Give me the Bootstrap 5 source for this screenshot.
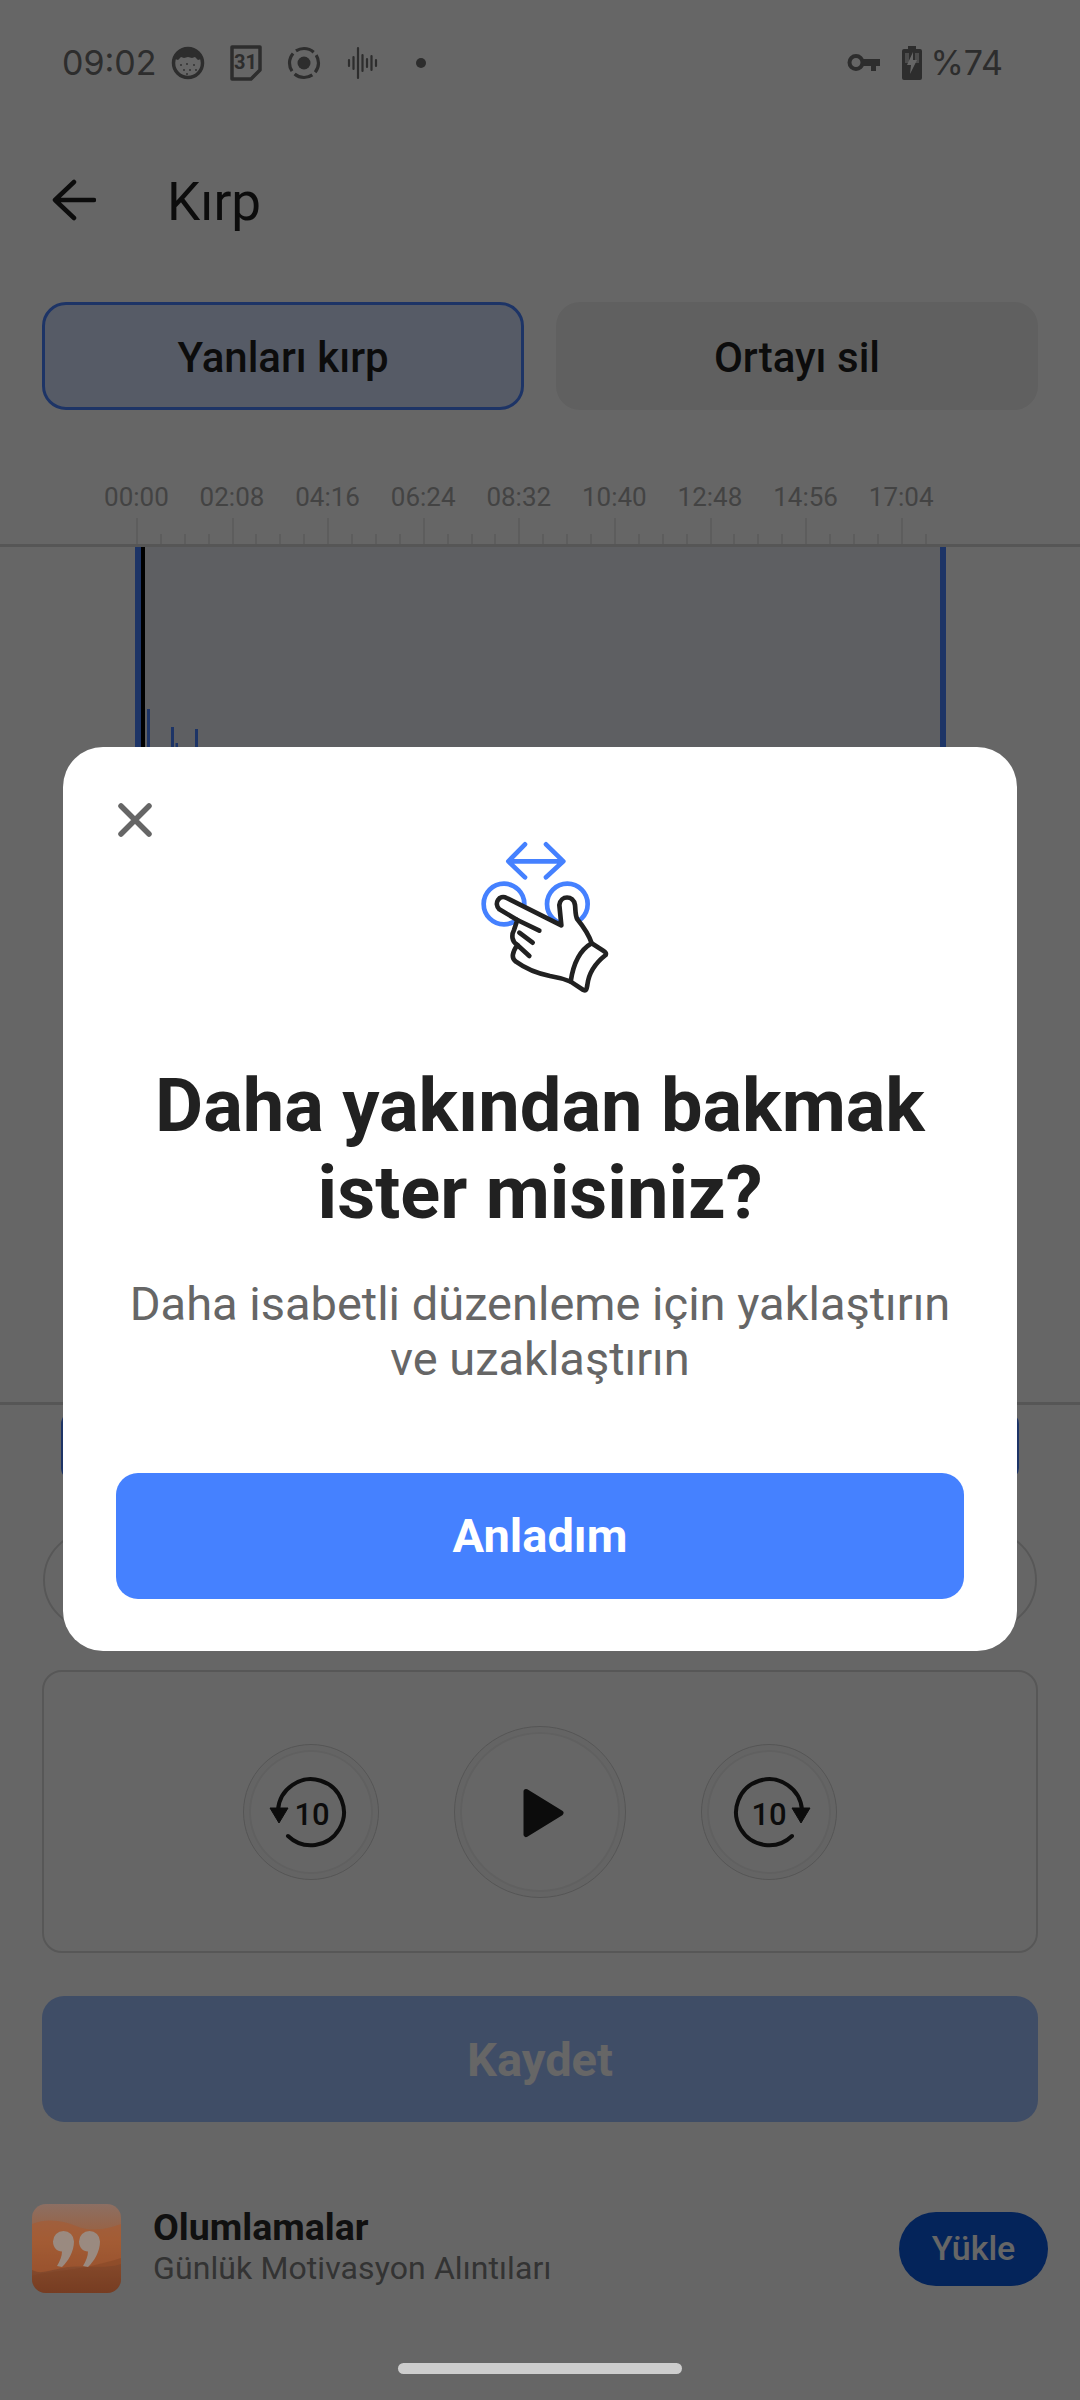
<!DOCTYPE html>
<html lang="tr">
<head>
<meta charset="utf-8">
<title>Kırp</title>
<link rel="stylesheet" href="https://cdn.jsdelivr.net/npm/bootstrap@5.3.0/dist/css/bootstrap.min.css">
<style>
html,body{margin:0;background:#fff}
body{width:1080px;height:2400px;overflow:hidden;position:relative;font-family:Roboto,"Liberation Sans",sans-serif;color:#1f1f1f}
.status-row{height:126px;padding:0 77px 0 62px;color:#707070}
.clock{font-family:Inter,Roboto,sans-serif;font-size:34px;line-height:1;margin-right:14px}
.pct{font-family:Inter,Roboto,sans-serif;font-size:34px;line-height:1;margin-left:8px}
.ic-gap{margin-right:24px}
.tool-row{height:148px;padding-left:52px}
.page-title{font-size:53px;font-weight:400;line-height:1;margin:4px 0 0 71px}
.tab-row{padding:0 42px;margin-top:28px;gap:32px}
.tab-btn{flex:1 1 0;height:108px;font-size:42px;font-weight:500;color:#1f1f1f;border-radius:24px;border:3px solid transparent;padding:2px 0 0;--bs-btn-color:#1f1f1f}
.tab-on{background:#d6e4ff;border-color:#4a82ff}
.tab-off{background:#f0f0f0}
.time-row{padding:72px 0 0 88.6px;height:108px}
.time-row span{width:95.6px;flex:none;text-align:center;font-size:26px;line-height:30px;color:#a9a9a9}
.ruler{height:26px;margin-left:136px;width:792px;
 background:
  repeating-linear-gradient(90deg,#e8e8e8 0 2px,transparent 2px 95.6px) 0 0/100% 26px no-repeat,
  repeating-linear-gradient(90deg,#e8e8e8 0 2px,transparent 2px 23.9px) 0 100%/100% 10px no-repeat}
.wave-wrap{height:861px;border-top:3px solid #d8d8d8;border-bottom:3px solid #d8d8d8}
.wave-sel{position:relative;margin-left:135px;width:811px;height:100%;background:#ebedf6;border-left:6px solid #4a82ff;border-right:6px solid #4a82ff}
.wave-marks{position:absolute;left:0;top:0}
.tool-bar{height:68px;margin:7px 61px 0;background:#4a82ff;border-radius:12px}
.pill-row{height:100px;margin:50px 43px 0;border:2.500px solid #dadada;border-radius:50px}
.player{height:283px;margin:40px 42px 0;border:2.500px solid #dadada;border-radius:20px;gap:75px}
.round-btn{border-radius:50%;border:1.500px solid #d4d4d4;box-shadow:inset 0 0 0 5px #fbfbfb,inset 0 0 0 7px #f0f0f0;flex:none}
.round-sm{width:136px;height:136px}
.round-lg{width:172px;height:172px}
.save-btn{height:126px;margin:43px 42px 0;width:calc(100% - 84px);background:#9fc0ff;color:#fff;font-size:47px;font-weight:700;border:0;border-radius:22px;display:block;padding:3px 0 0}
.ad-row{height:89px;margin-top:82px;padding:0 32px}
.ad-art{width:89px;height:89px;border-radius:14px;position:relative;z-index:20;flex:none;display:block}
.ad-text{margin-left:32px;flex:1}
.ad-name{font-size:37.500px;font-weight:700;line-height:42px;color:#2a2a2a;margin-top:-3px}
.ad-sub{font-size:32px;line-height:40px;color:#808080;letter-spacing:.1px}
.ad-btn{width:149px;height:74px;background:#0c5ae1;color:#fff;font-size:34px;font-weight:500;border:0;border-radius:37px;padding:0;flex:none}
.home-bar{width:284px;height:11px;background:#cdcdcd;border-radius:6px;margin:70px auto 0;position:relative;z-index:20}
.dim-layer{position:absolute;inset:0;background:rgba(0,0,0,.6);z-index:10}
.sheet{width:954px;background:#fff;border:0;border-radius:40px;padding:73px 53px 52px;position:relative;margin-top:-3px}
.sheet-close{position:absolute;left:55px;top:56px;background:none;border:0;padding:0;line-height:0}
.hand{display:block;margin:0 auto}
.sheet-title{font-size:74px;font-weight:700;line-height:87px;color:#212121;margin:52px 0 0;text-align:center}
.sheet-sub{font-size:47px;line-height:55px;color:#666;margin:40px 0 0;text-align:center}
.sheet-btn{height:126px;margin-top:87px;background:#4581ff;color:#fff;font-size:47px;font-weight:700;border:0;border-radius:22px;padding:2px 0 0}
</style>
</head>
<body>
<div class="status-row d-flex align-items-center">
  <span class="clock">09:02</span>
  <svg class="ic-gap" width="34" height="34" viewBox="0 0 34 34"><circle cx="17" cy="17" r="14.500" fill="none" stroke="currentColor" stroke-width="3.500"/><path d="M4 13C6 5 12 2 17 2s11 3 13 11l-3 1-3-3-3 1-4-1-4 1-3-1-3 3z" fill="currentColor"/><g fill="currentColor"><circle cx="10" cy="19" r=".9"/><circle cx="16" cy="18" r=".9"/><circle cx="23" cy="19" r=".9"/><circle cx="13" cy="24" r=".9"/><circle cx="19" cy="24" r=".9"/><circle cx="25" cy="24" r=".9"/><circle cx="16" cy="28" r=".9"/></g></svg>
  <svg class="ic-gap" width="34" height="36" viewBox="0 0 34 36"><path d="M3 2h28v23l-9 9H3z" fill="none" stroke="currentColor" stroke-width="3.500" stroke-linejoin="round"/><text x="16.500" y="24" text-anchor="middle" font-family="Roboto,sans-serif" font-weight="700" font-size="20" fill="currentColor">31</text></svg>
  <svg class="ic-gap" width="34" height="34" viewBox="0 0 34 34"><circle cx="17" cy="17" r="14.500" fill="none" stroke="currentColor" stroke-width="3.200" stroke-dasharray="19 3.800" stroke-dashoffset="9"/><circle cx="17" cy="17" r="6.500" fill="currentColor"/></svg>
  <svg width="34" height="34" viewBox="0 0 34 34" style="margin-right:36px"><g stroke="currentColor" stroke-width="2.200" stroke-linecap="round"><path d="M4 14v6M8.500 11v12M13 2v30M17.500 9v16M22 13v8M26.500 10v14M31 14v6"/></g></svg>
  <svg width="12" height="12" viewBox="0 0 12 12"><circle cx="6" cy="6" r="5" fill="currentColor"/></svg>
  <span class="ms-auto d-flex align-items-center">
    <svg width="34" height="20" viewBox="0 0 34 20" style="margin-right:21px"><circle cx="9" cy="9.500" r="6.500" fill="none" stroke="currentColor" stroke-width="4"/><path d="M15 6h18v7h-4v5h-5v-5h-9z" fill="currentColor"/></svg>
    <svg width="20" height="34" viewBox="0 0 20 34"><path d="M6 0h8v3h4a2 2 0 0 1 2 2v27a2 2 0 0 1-2 2H2a2 2 0 0 1-2-2V5a2 2 0 0 1 2-2h4z" fill="currentColor"/><path d="M3 7h4v10h-4zM13 7h4v10h-4z" fill="#fff" opacity=".55"/><path d="M11 6l-6 13h4l-1 9 7-14h-4z" fill="#fff"/></svg>
    <span class="pct">%74</span>
  </span>
</div>

<div class="tool-row d-flex align-items-center">
  <svg width="44" height="42" viewBox="0 0 44 42"><path d="M22 3L3 21l19 18M4 21h38" fill="none" stroke="#1f1f1f" stroke-width="4.500" stroke-linecap="round" stroke-linejoin="round"/></svg>
  <h1 class="page-title">Kırp</h1>
</div>

<div class="tab-row d-flex">
  <button class="btn tab-btn tab-on">Yanları kırp</button>
  <button class="btn tab-btn tab-off">Ortayı sil</button>
</div>

<div class="time-row d-flex">
  <span>00:00</span><span>02:08</span><span>04:16</span><span>06:24</span><span>08:32</span><span>10:40</span><span>12:48</span><span>14:56</span><span>17:04</span>
</div>
<div class="ruler"></div>

<div class="wave-wrap">
  <div class="wave-sel">
    <svg class="wave-marks" width="70" height="853" viewBox="0 0 70 853">
      <rect x="-1" y="0" width="5" height="853" fill="#000"/>
      <g fill="#4a82ff"><rect x="6" y="162" width="3" height="530"/><rect x="30" y="180" width="3" height="490"/><rect x="34.500" y="196" width="2.500" height="460"/><rect x="54" y="182" width="3" height="490"/></g>
    </svg>
  </div>
</div>
<div class="tool-bar"></div>
<div class="pill-row"></div>

<div class="player d-flex align-items-center justify-content-center">
  <div class="round-btn round-sm d-flex align-items-center justify-content-center">
    <svg width="100" height="100" viewBox="0 0 100 100"><path d="M17 48A33 33 0 1 1 27 74" fill="none" stroke="#1f1f1f" stroke-width="4" stroke-linecap="round"/><path d="M9 46h18l-9 15z" fill="#1f1f1f" stroke="#1f1f1f" stroke-linejoin="round"/><text x="51" y="63" text-anchor="middle" font-family="Roboto,sans-serif" font-size="31" font-weight="500" fill="#1f1f1f">10</text></svg>
  </div>
  <div class="round-btn round-lg d-flex align-items-center justify-content-center">
    <svg width="60" height="60" viewBox="0 0 60 60"><path d="M16 9.500L51 31 16 52.500z" fill="#1f1f1f" stroke="#1f1f1f" stroke-width="5" stroke-linejoin="round"/></svg>
  </div>
  <div class="round-btn round-sm d-flex align-items-center justify-content-center">
    <svg width="100" height="100" viewBox="0 0 100 100"><path d="M83 48A33 33 0 1 0 73 74" fill="none" stroke="#1f1f1f" stroke-width="4" stroke-linecap="round"/><path d="M73 46h18l-9 15z" fill="#1f1f1f" stroke="#1f1f1f" stroke-linejoin="round"/><text x="50" y="63" text-anchor="middle" font-family="Roboto,sans-serif" font-size="31" font-weight="500" fill="#1f1f1f">10</text></svg>
  </div>
</div>

<button class="btn save-btn">Kaydet</button>

<div class="ad-row d-flex align-items-center">
  <svg class="ad-art" width="89" height="89" viewBox="0 0 89 89" role="img" aria-label="Olumlamalar">
    <defs><linearGradient id="ga" x1="0" y1="0" x2="0" y2="1"><stop offset="0" stop-color="#8c6f63"/><stop offset=".4" stop-color="#9c5f3c"/><stop offset="1" stop-color="#733a21"/></linearGradient></defs>
    <rect width="89" height="89" fill="url(#ga)"/>
    <path d="M0 20C15 14 30 16 44 22s30 4 45-2v40C70 66 50 60 30 64S10 70 0 66z" fill="#a85a30" opacity=".6"/>
    <path d="M0 72c20-6 45-4 89-18v35H0z" fill="#7d4023" opacity=".4"/>
    <g fill="#9a8a80" transform="translate(0 1.500)"><path d="M21 36a10.500 10.500 0 1 1 21 0c0 10-6 20-12 25.500l-5-1c3-5 5-10 5-14.500c-5 0-9-4-9-10z"/><path d="M47 36a10.500 10.500 0 1 1 21 0c0 10-6 20-12 25.500l-5-1c3-5 5-10 5-14.500c-5 0-9-4-9-10z"/></g>
  </svg>
  <div class="ad-text">
    <div class="ad-name">Olumlamalar</div>
    <div class="ad-sub">Günlük Motivasyon Alıntıları</div>
  </div>
  <button class="btn ad-btn">Yükle</button>
</div>

<div class="home-bar"></div>

<div class="dim-layer d-flex align-items-center justify-content-center">
  <div class="sheet modal-content">
    <button class="sheet-close" aria-label="Kapat">
      <svg width="34" height="34" viewBox="0 0 34 34"><path d="M3 3l28 28M31 3L3 31" stroke="#666" stroke-width="5.500" stroke-linecap="round" fill="none"/></svg>
    </button>
    <svg class="hand" width="200" height="190" viewBox="0 0 600 570">
      <g fill="none" stroke="#4581ff" stroke-width="14" stroke-linecap="round" stroke-linejoin="round">
        <path d="M208 124H366M255 73l-50 51 50 48M318 73l52 51-52 48"/>
        <circle cx="192" cy="252" r="61"/>
        <circle cx="382" cy="252" r="61"/>
      </g>
      <g stroke="#212121" stroke-width="14" stroke-linecap="round" stroke-linejoin="round">
        <path fill="#fff" d="M364 316L200 234C178 222 160 250 178 268L232 300L222 330C214 345 215 365 232 375C218 395 212 415 228 425C262 450 300 462 330 468C355 472 375 478 392 485L430 510C440 515 440 505 442 495C446 460 465 430 497 405C500 398 495 395 490 392L455 370C445 340 430 320 412 298C405 285 407 270 405 255C400 225 362 225 358 255Z"/>
        <path fill="none" d="M232 300L298 332M238 338L278 368M232 375L268 408M455 370C420 390 400 430 392 485"/>
      </g>
    </svg>
    <h2 class="sheet-title">Daha yakından bakmak<br>ister misiniz?</h2>
    <p class="sheet-sub">Daha isabetli düzenleme için yaklaştırın<br>ve uzaklaştırın</p>
    <button class="btn sheet-btn w-100">Anladım</button>
  </div>
</div>
<script src="https://cdn.jsdelivr.net/npm/bootstrap@5.3.0/dist/js/bootstrap.bundle.min.js"></script>
</body>
</html>
